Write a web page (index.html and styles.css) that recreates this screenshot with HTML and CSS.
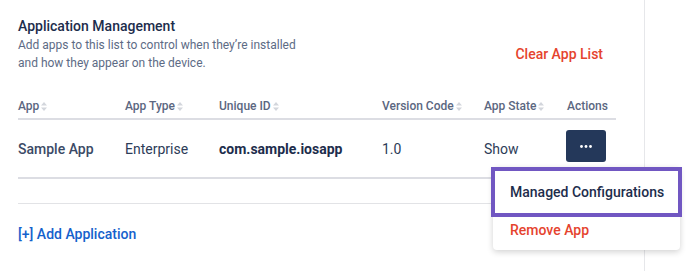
FILE: index.html
```html
<!DOCTYPE html>
<html lang="en">
<head>
    <meta charset="UTF-8">
    <title>Application Management</title>
    <link rel="stylesheet" href="styles.css">
</head>
<body>
    <div class="panel">
        <div class="panel-head">
            <div class="intro">
                <h2 class="title">Application Management</h2>
                <p class="desc">Add apps to this list to control when they’re installed<br>and how they appear on the device.</p>
            </div>
            <a href="#" class="clear-link">Clear App List</a>
        </div>

        <table class="apps">
            <thead>
                <tr>
                    <th class="col-app">App<svg class="sort" width="6" height="9" viewBox="0 0 6 9"><path d="M3 0L6 3.5H0z M3 9L0 5.5H6z"/></svg></th>
                    <th class="col-type">App Type<svg class="sort" width="6" height="9" viewBox="0 0 6 9"><path d="M3 0L6 3.5H0z M3 9L0 5.5H6z"/></svg></th>
                    <th class="col-id">Unique ID<svg class="sort" width="6" height="9" viewBox="0 0 6 9"><path d="M3 0L6 3.5H0z M3 9L0 5.5H6z"/></svg></th>
                    <th class="col-version">Version Code<svg class="sort" width="6" height="9" viewBox="0 0 6 9"><path d="M3 0L6 3.5H0z M3 9L0 5.5H6z"/></svg></th>
                    <th class="col-state">App State<svg class="sort" width="6" height="9" viewBox="0 0 6 9"><path d="M3 0L6 3.5H0z M3 9L0 5.5H6z"/></svg></th>
                    <th class="col-actions">Actions</th>
                </tr>
            </thead>
            <tbody>
                <tr>
                    <td class="app-name">Sample App</td>
                    <td>Enterprise</td>
                    <td class="app-id">com.sample.iosapp</td>
                    <td>1.0</td>
                    <td>Show</td>
                    <td class="actions">
                        <div class="actions-wrap">
                            <button class="more-btn">
                                <svg width="12" height="3" viewBox="0 0 12 3"><circle cx="1.5" cy="1.5" r="1.4"/><circle cx="6" cy="1.5" r="1.4"/><circle cx="10.5" cy="1.5" r="1.4"/></svg>
                            </button>
                            <div class="dropdown">
                                <a href="#" class="dropdown-item highlighted">Managed Configurations</a>
                                <a href="#" class="dropdown-item danger">Remove App</a>
                            </div>
                        </div>
                    </td>
                </tr>
            </tbody>
        </table>

        <div class="divider"></div>

        <a href="#" class="add-link">[+] Add Application</a>
    </div>
</body>
</html>
```

FILE: styles.css
```css
body {
    margin: 0;
    padding: 0;
    background-color: #ffffff;
    font-family: Roboto, "Liberation Sans", sans-serif;
    color: #2d3c58;
}

.panel {
    box-sizing: border-box;
    width: 645px;
    height: 271px;
    padding: 16px 28px 0 18px;
    border-right: 1px solid #e6e7ea;
}

.panel-head {
    display: flex;
    justify-content: space-between;
}

.title {
    margin: 0;
    font-size: 14px;
    line-height: 20px;
    font-weight: 500;
    color: #1d2d4c;
}

.desc {
    margin: 0;
    font-size: 12px;
    line-height: 18px;
    color: #5d6b85;
}

.clear-link {
    align-self: flex-end;
    padding: 8px 13px;
    font-size: 14px;
    line-height: 20px;
    font-weight: 500;
    color: #e5432e;
    text-decoration: none;
}

.apps {
    width: 100%;
    margin-top: 16px;
    border-collapse: collapse;
    table-layout: fixed;
}

.apps th {
    padding: 10px 0 4px;
    text-align: left;
    font-size: 12px;
    line-height: 16px;
    font-weight: 500;
    color: #5b6781;
    border-bottom: 2px solid #dcdde3;
}

.sort {
    margin-left: 2px;
    fill: #d3d6dc;
    vertical-align: -1px;
}

.col-app { width: 107px; }
.col-type { width: 94px; }
.col-id { width: 163px; }
.col-version { width: 102px; }
.col-state { width: 83px; }

.apps td {
    padding: 19px 0 18px;
    font-size: 14px;
    line-height: 20px;
    vertical-align: top;
    white-space: nowrap;
    border-bottom: 2px solid #dcdde3;
}

.app-name {
    font-weight: 500;
    color: #3b4a66;
}

.app-id {
    font-weight: 700;
    color: #1d2d4c;
}

.apps td.actions {
    padding: 10px 0 15px;
}

.actions-wrap {
    position: relative;
    margin-left: -1px;
}

.more-btn {
    display: flex;
    align-items: center;
    justify-content: center;
    width: 40px;
    height: 32px;
    padding: 0;
    border: none;
    border-radius: 3px;
    background-color: #24385a;
    fill: #ffffff;
}

.dropdown {
    position: absolute;
    top: 37px;
    left: -73px;
    width: 187px;
    padding-bottom: 4px;
    background-color: #ffffff;
    border-radius: 4px;
    box-shadow: 0 2px 6px rgba(0, 0, 0, 0.18);
    z-index: 10;
}

.dropdown-item {
    display: block;
    padding: 8px 17px;
    font-size: 14px;
    line-height: 20px;
    font-weight: 500;
    text-decoration: none;
}

.dropdown-item.highlighted {
    margin: 0 -2px;
    padding: 11px 15px 11px 15px;
    border: 4px solid #7157c2;
    color: #1d2d4c;
}

.dropdown-item.danger {
    color: #e5432e;
    padding: 3px 17px 6px;
}

.divider {
    margin-top: 24px;
    border-top: 1px solid #e2e3e6;
}

.add-link {
    display: inline-block;
    margin-top: 20px;
    font-size: 14px;
    line-height: 20px;
    font-weight: 500;
    color: #1461cc;
    text-decoration: none;
}
```
